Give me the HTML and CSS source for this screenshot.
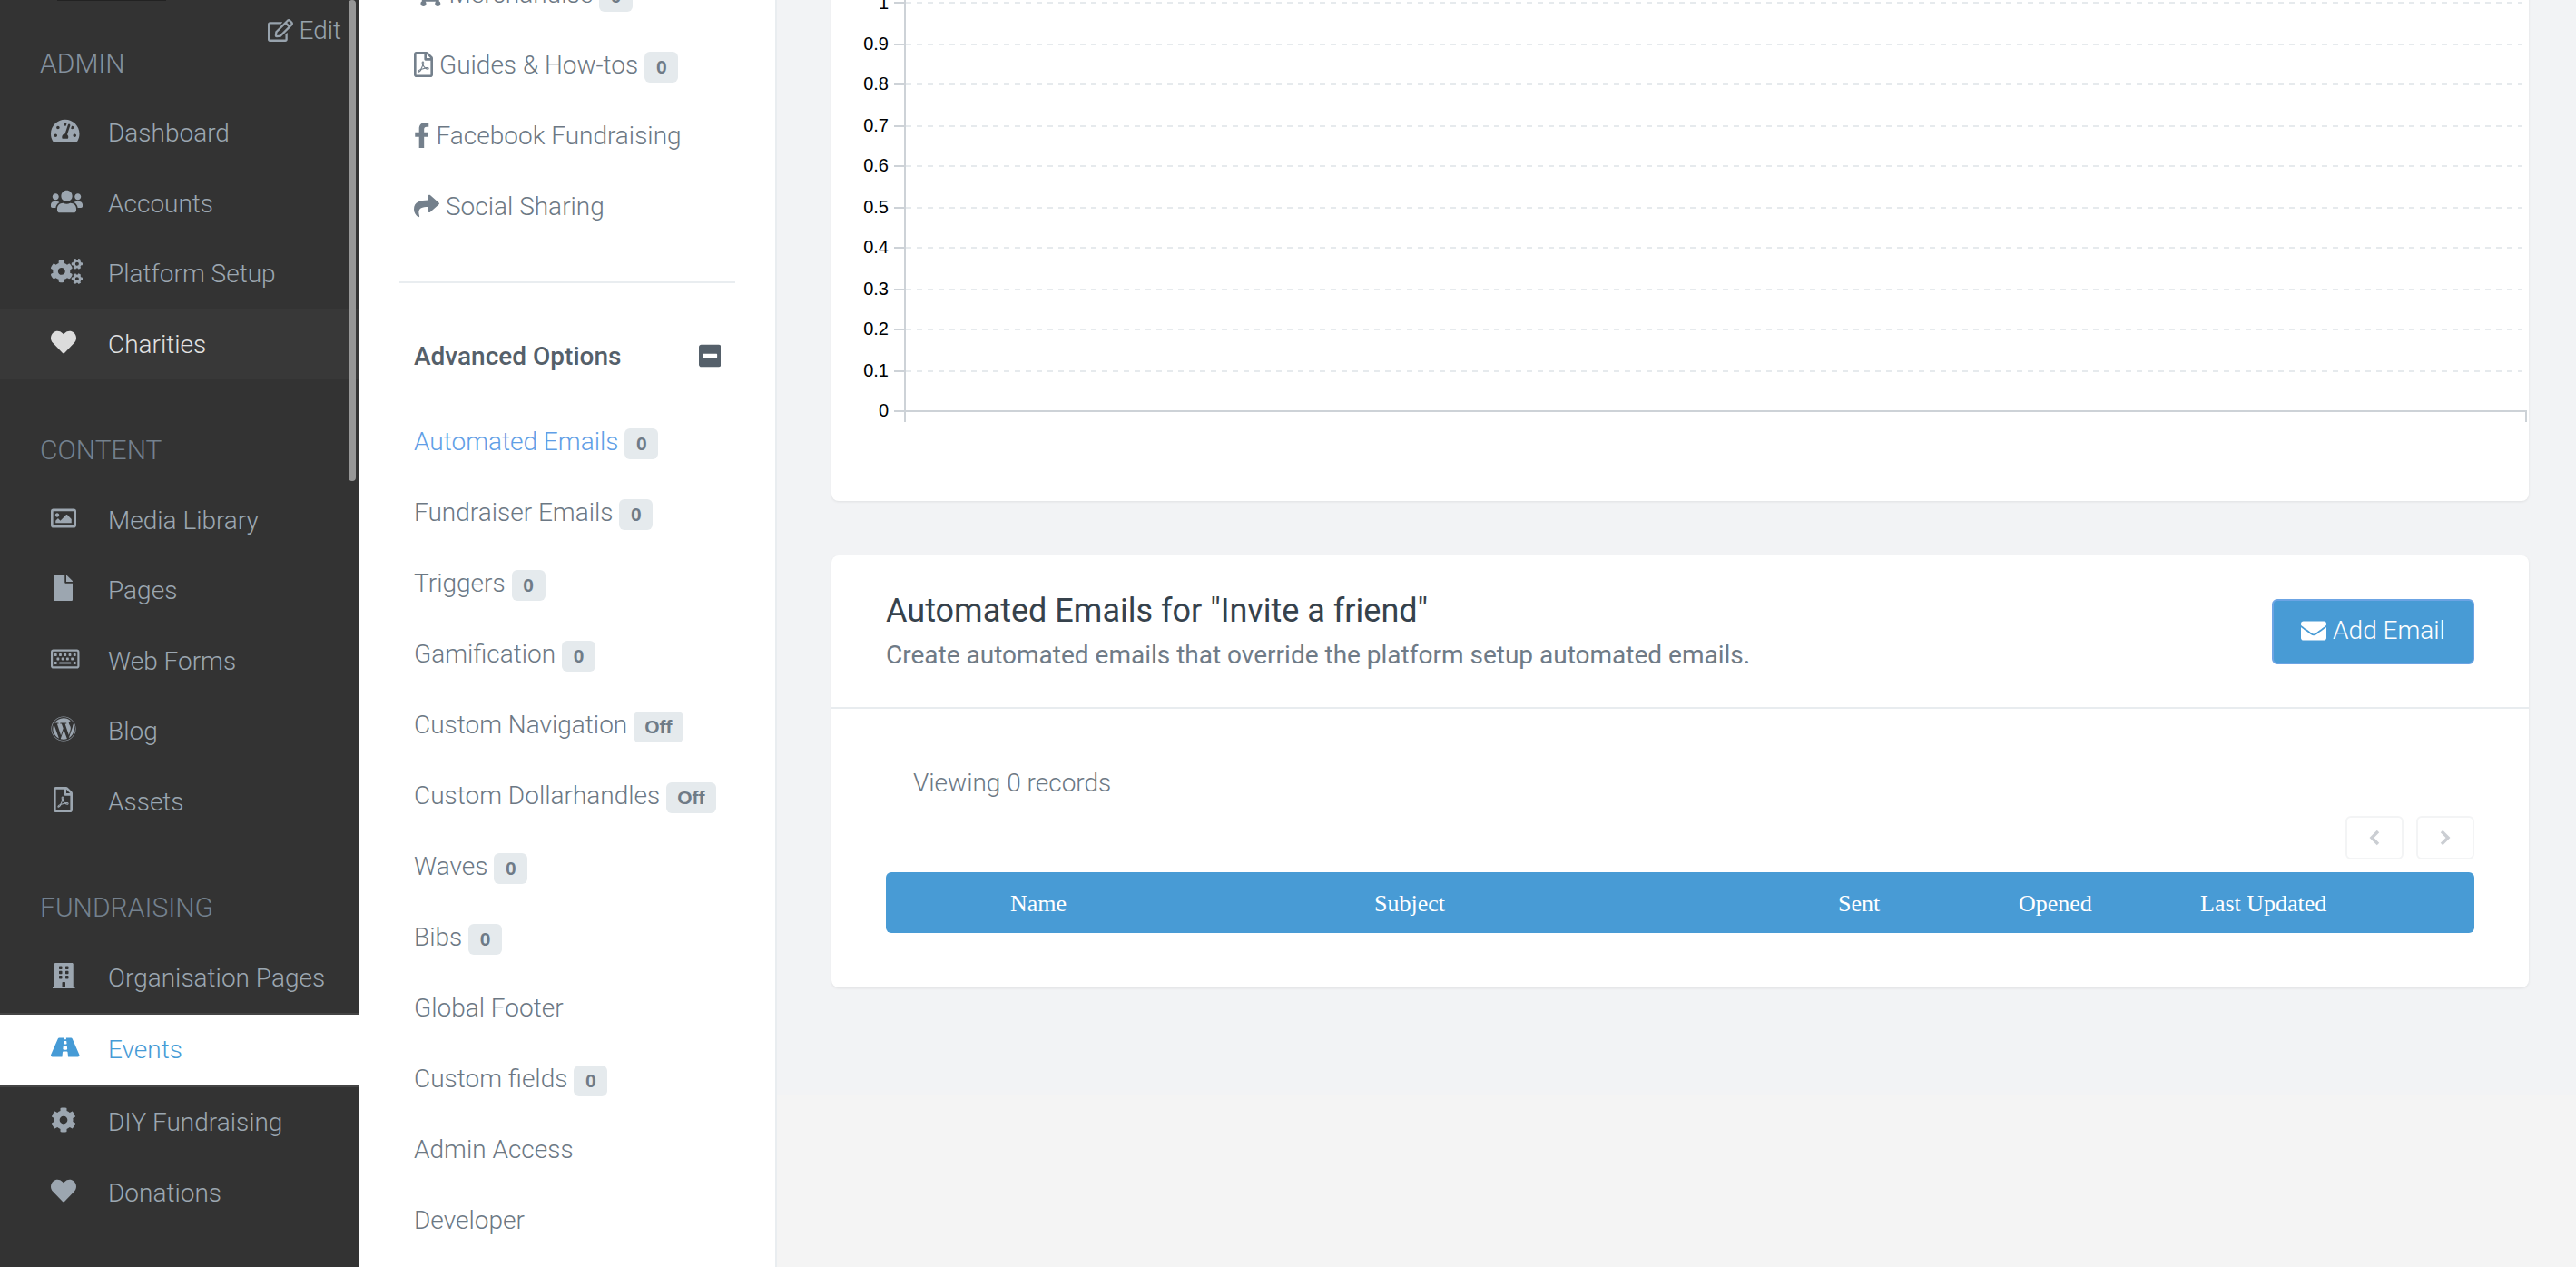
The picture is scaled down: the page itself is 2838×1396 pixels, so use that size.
FILE: index.html
```html
<!DOCTYPE html>
<html lang="en">
<head>
<meta charset="utf-8">
<title>Automated Emails</title>
<link rel="stylesheet" href="styles.css">
</head>
<body>
<div class="app">
  <aside class="sidebar">
    <div class="top-sliver"></div>
    <a class="edit"><svg class="edit-ico" viewBox="0 0 576 512"><path d="M402.3 344.9l32-32c5-5 13.7-1.5 13.7 5.7V464c0 26.5-21.5 48-48 48H48c-26.5 0-48-21.5-48-48V112c0-26.5 21.5-48 48-48h273.5c7.1 0 10.7 8.6 5.7 13.7l-32 32c-1.5 1.5-3.5 2.3-5.7 2.3H48v352h352V350.5c0-2.1.8-4.1 2.3-5.6zm156.6-201.8L296.3 405.7l-90.4 10c-26.2 2.9-48.5-19.2-45.6-45.6l10-90.4L432.9 17.1c22.9-22.9 59.9-22.9 82.7 0l43.2 43.2c22.9 22.9 22.9 60 .1 82.8zM460.1 174L402 115.9 216.2 301.8l-7.3 65.3 65.3-7.3L460.1 174zm64.8-79.7l-43.2-43.2c-4.1-4.1-10.8-4.1-14.8 0L436 82l58.1 58.1 30.9-30.9c4-4.2 4-10.8-.1-14.9z"/></svg>Edit</a>
    <div class="scroll-thumb"></div>

    <section class="group group-first">
      <h3 class="group-title group-title-admin">ADMIN</h3>
      <a class="item"><span class="ico"><svg class="i" width="31.5" height="28" viewBox="0 0 576 512"><path d="M288 32C128.94 32 0 160.94 0 320c0 52.8 14.25 102.26 39.06 144.8 5.61 9.62 16.3 15.2 27.44 15.2h443c11.14 0 21.83-5.58 27.44-15.2C561.75 422.26 576 372.8 576 320c0-159.06-128.94-288-288-288zm0 64c14.71 0 26.58 10.13 30.32 23.65-1.11 2.26-2.64 4.23-3.45 6.67l-9.22 27.67c-5.13 3.49-10.97 6.01-17.64 6.01-17.67 0-32-14.33-32-32S270.33 96 288 96zM96 384c-17.67 0-32-14.33-32-32s14.33-32 32-32 32 14.33 32 32-14.33 32-32 32zm48-160c-17.67 0-32-14.33-32-32s14.33-32 32-32 32 14.33 32 32-14.33 32-32 32zm246.77-72.41l-61.33 184C343.13 347.33 352 364.54 352 384c0 11.72-3.38 22.55-8.88 32H232.88c-5.5-9.45-8.88-20.28-8.88-32 0-33.94 26.5-61.43 59.9-63.59l61.34-184.01c4.17-12.56 17.73-19.45 30.36-15.17 12.57 4.19 19.35 17.79 15.17 30.36zm14.66 57.2l15.52-46.55c3.47-1.29 7.13-2.23 11.05-2.23 17.67 0 32 14.33 32 32s-14.33 32-32 32c-11.38-.01-20.89-6.28-26.57-15.22zM480 384c-17.67 0-32-14.33-32-32s14.33-32 32-32 32 14.33 32 32-14.33 32-32 32z"/></svg></span>Dashboard</a>
      <a class="item"><span class="ico"><svg class="i" width="35" height="28" viewBox="0 0 640 512"><path d="M96 224c35.3 0 64-28.7 64-64s-28.7-64-64-64-64 28.7-64 64 28.7 64 64 64zm448 0c35.3 0 64-28.7 64-64s-28.7-64-64-64-64 28.7-64 64 28.7 64 64 64zm32 32h-64c-17.6 0-33.5 7.1-45.1 18.6 40.3 22.1 68.9 62 75.1 109.4h66c17.7 0 32-14.3 32-32v-32c0-35.3-28.7-64-64-64zm-256 0c61.9 0 112-50.1 112-112S381.9 32 320 32 208 82.1 208 144s50.1 112 112 112zm76.8 32h-8.3c-20.8 10-43.9 16-68.5 16s-47.6-6-68.5-16h-8.3C179.6 288 128 339.6 128 403.2V432c0 26.5 21.5 48 48 48h288c26.5 0 48-21.5 48-48v-28.8c0-63.6-51.6-115.2-115.2-115.2zm-223.7-13.4C161.5 263.1 145.6 256 128 256H64c-35.3 0-64 28.7-64 64v32c0 17.7 14.3 32 32 32h65.9c6.3-47.4 34.9-87.3 75.2-109.4z"/></svg></span>Accounts</a>
      <a class="item"><span class="ico"><svg class="i" width="35" height="28" viewBox="0 0 640 512"><path d="M512.1 191l-8.2 14.3c-3 5.3-9.4 7.5-15.1 5.4-11.8-4.4-22.6-10.7-32.1-18.6-4.6-3.8-5.8-10.5-2.8-15.7l8.2-14.3c-6.9-8-12.3-17.3-15.9-27.4h-16.5c-6 0-11.2-4.3-12.2-10.3-2-12-2.1-24.6 0-37.1 1-6 6.2-10.4 12.2-10.4h16.5c3.6-10.1 9-19.4 15.9-27.4l-8.2-14.3c-3-5.2-1.9-11.9 2.8-15.7 9.5-7.9 20.4-14.2 32.1-18.6 5.7-2.1 12.1.1 15.1 5.4l8.2 14.3c10.5-1.9 21.2-1.9 31.7 0L552 6.3c3-5.3 9.4-7.5 15.1-5.4 11.8 4.4 22.6 10.7 32.1 18.6 4.6 3.8 5.8 10.5 2.8 15.7l-8.2 14.3c6.9 8 12.3 17.3 15.9 27.4h16.5c6 0 11.2 4.3 12.2 10.3 2 12 2.1 24.6 0 37.1-1 6-6.2 10.4-12.2 10.4h-16.5c-3.6 10.1-9 19.4-15.9 27.4l8.2 14.3c3 5.2 1.9 11.9-2.8 15.7-9.5 7.9-20.4 14.2-32.1 18.6-5.7 2.1-12.1-.1-15.1-5.4l-8.2-14.3c-10.4 1.9-21.2 1.9-31.7 0zm-10.5-58.8c38.5 29.6 82.4-14.3 52.8-52.8-38.5-29.7-82.4 14.3-52.8 52.8zM386.3 286.1l33.7 16.8c10.1 5.8 14.5 18.1 10.5 29.1-8.9 24.2-26.4 46.4-42.6 65.8-7.4 8.9-20.2 11.1-30.3 5.3l-29.1-16.8c-16 13.7-34.6 24.6-54.9 31.7v33.6c0 11.6-8.3 21.6-19.7 23.6-24.6 4.2-50.4 4.4-75.9 0-11.5-2-20-11.9-20-23.6V418c-20.3-7.2-38.9-18-54.9-31.7L74 403c-10 5.8-22.9 3.6-30.3-5.3-16.2-19.4-33.3-41.6-42.2-65.7-4-10.9.4-23.2 10.5-29.1l33.3-16.8c-3.9-20.9-3.9-42.4 0-63.4L12 205.8c-10.1-5.8-14.6-18.1-10.5-29 8.9-24.2 26-46.4 42.2-65.8 7.4-8.9 20.2-11.1 30.3-5.3l29.1 16.8c16-13.7 34.6-24.6 54.9-31.7V57.1c0-11.5 8.2-21.5 19.6-23.5 24.6-4.2 50.5-4.4 76-.1 11.5 2 20 11.9 20 23.6v33.6c20.3 7.2 38.9 18 54.9 31.7l29.1-16.8c10-5.8 22.9-3.6 30.3 5.3 16.2 19.4 33.2 41.6 42.1 65.8 4 10.9.1 23.2-10 29.1l-33.7 16.8c3.9 21 3.9 42.5 0 63.5zm-117.6 21.1c59.2-77-28.7-164.9-105.7-105.7-59.2 77 28.7 164.9 105.7 105.7zm243.4 182.7l-8.2 14.3c-3 5.3-9.4 7.5-15.1 5.4-11.8-4.4-22.6-10.7-32.1-18.6-4.6-3.8-5.8-10.5-2.8-15.7l8.2-14.3c-6.9-8-12.3-17.3-15.9-27.4h-16.5c-6 0-11.2-4.3-12.2-10.3-2-12-2.1-24.6 0-37.1 1-6 6.2-10.4 12.2-10.4h16.5c3.6-10.1 9-19.4 15.9-27.4l-8.2-14.3c-3-5.2-1.9-11.9 2.8-15.7 9.5-7.9 20.4-14.2 32.1-18.6 5.7-2.1 12.1.1 15.1 5.4l8.2 14.3c10.5-1.9 21.2-1.9 31.7 0l8.2-14.3c3-5.3 9.4-7.5 15.1-5.4 11.8 4.4 22.6 10.7 32.1 18.6 4.6 3.8 5.8 10.5 2.8 15.7l-8.2 14.3c6.9 8 12.3 17.3 15.9 27.4h16.5c6 0 11.2 4.3 12.2 10.3 2 12 2.1 24.6 0 37.1-1 6-6.2 10.4-12.2 10.4h-16.5c-3.6 10.1-9 19.4-15.9 27.4l8.2 14.3c3 5.2 1.9 11.9-2.8 15.7-9.5 7.9-20.4 14.2-32.1 18.6-5.7 2.1-12.1-.1-15.1-5.4l-8.2-14.3c-10.4 1.9-21.2 1.9-31.7 0zM501.6 431c38.5 29.6 82.4-14.3 52.8-52.8-38.5-29.6-82.4 14.3-52.8 52.8z"/></svg></span>Platform Setup</a>
      <a class="item item-hover"><span class="ico"><svg class="i" width="28" height="28" viewBox="0 0 512 512"><path d="M462.3 62.6C407.5 15.9 326 24.3 275.7 76.2L256 96.5l-19.7-20.3C186.1 24.3 104.5 15.9 49.7 62.6c-62.8 53.6-66.1 149.8-9.9 207.9l193.5 199.8c12.5 12.9 32.8 12.9 45.3 0l193.5-199.8c56.3-58.1 53-154.3-9.8-207.9z"/></svg></span>Charities</a>
    </section>

    <section class="group">
      <h3 class="group-title">CONTENT</h3>
      <a class="item"><span class="ico"><svg class="i" width="28" height="28" viewBox="0 0 512 512"><path d="M464 64H48C21.49 64 0 85.49 0 112v288c0 26.51 21.49 48 48 48h416c26.51 0 48-21.49 48-48V112c0-26.51-21.49-48-48-48zm-6 336H54a6 6 0 0 1-6-6V118a6 6 0 0 1 6-6h404a6 6 0 0 1 6 6v276a6 6 0 0 1-6 6zM128 152c-22.091 0-40 17.909-40 40s17.909 40 40 40 40-17.909 40-40-17.909-40-40-40zM96 352h320v-80l-87.515-87.515c-4.686-4.686-12.284-4.686-16.971 0L192 304l-39.515-39.515c-4.686-4.686-12.284-4.686-16.971 0L96 304v48z"/></svg></span>Media Library</a>
      <a class="item"><span class="ico"><svg class="i i-narrow" width="21" height="28" viewBox="0 0 384 512"><path d="M224 136V0H24C10.7 0 0 10.7 0 24v464c0 13.3 10.7 24 24 24h336c13.3 0 24-10.7 24-24V160H248c-13.2 0-24-10.8-24-24zm160-14.1v6.1H256V0h6.1c6.4 0 12.5 2.5 17 7l97.9 98c4.5 4.5 7 10.6 7 16.9z"/></svg></span>Pages</a>
      <a class="item"><span class="ico"><svg class="i" width="31.5" height="28" viewBox="0 0 576 512"><path d="M528 64H48C21.49 64 0 85.49 0 112v288c0 26.51 21.49 48 48 48h480c26.51 0 48-21.49 48-48V112c0-26.51-21.49-48-48-48zm8 336c0 4.411-3.589 8-8 8H48c-4.411 0-8-3.589-8-8V112c0-4.411 3.589-8 8-8h480c4.411 0 8 3.589 8 8v288zM170 270v-28c0-6.627-5.373-12-12-12h-28c-6.627 0-12 5.373-12 12v28c0 6.627 5.373 12 12 12h28c6.627 0 12-5.373 12-12zm96 0v-28c0-6.627-5.373-12-12-12h-28c-6.627 0-12 5.373-12 12v28c0 6.627 5.373 12 12 12h28c6.627 0 12-5.373 12-12zm96 0v-28c0-6.627-5.373-12-12-12h-28c-6.627 0-12 5.373-12 12v28c0 6.627 5.373 12 12 12h28c6.627 0 12-5.373 12-12zm96 0v-28c0-6.627-5.373-12-12-12h-28c-6.627 0-12 5.373-12 12v28c0 6.627 5.373 12 12 12h28c6.627 0 12-5.373 12-12zm-336 82v-28c0-6.627-5.373-12-12-12H82c-6.627 0-12 5.373-12 12v28c0 6.627 5.373 12 12 12h28c6.627 0 12-5.373 12-12zm384 0v-28c0-6.627-5.373-12-12-12h-28c-6.627 0-12 5.373-12 12v28c0 6.627 5.373 12 12 12h28c6.627 0 12-5.373 12-12zM122 188v-28c0-6.627-5.373-12-12-12H82c-6.627 0-12 5.373-12 12v28c0 6.627 5.373 12 12 12h28c6.627 0 12-5.373 12-12zm96 0v-28c0-6.627-5.373-12-12-12h-28c-6.627 0-12 5.373-12 12v28c0 6.627 5.373 12 12 12h28c6.627 0 12-5.373 12-12zm96 0v-28c0-6.627-5.373-12-12-12h-28c-6.627 0-12 5.373-12 12v28c0 6.627 5.373 12 12 12h28c6.627 0 12-5.373 12-12zm96 0v-28c0-6.627-5.373-12-12-12h-28c-6.627 0-12 5.373-12 12v28c0 6.627 5.373 12 12 12h28c6.627 0 12-5.373 12-12zm96 0v-28c0-6.627-5.373-12-12-12h-28c-6.627 0-12 5.373-12 12v28c0 6.627 5.373 12 12 12h28c6.627 0 12-5.373 12-12zm-98 158v-16c0-6.627-5.373-12-12-12H180c-6.627 0-12 5.373-12 12v16c0 6.627 5.373 12 12 12h216c6.627 0 12-5.373 12-12z"/></svg></span>Web Forms</a>
      <a class="item"><span class="ico"><svg class="i" width="28" height="28" viewBox="0 0 512 512"><path d="M61.7 169.4l101.5 278C92.2 413 43.3 340.2 43.3 256c0-30.9 6.6-60.1 18.4-86.6zm337.9 75.9c0-26.3-9.4-44.5-17.5-58.7-10.8-17.5-20.9-32.4-20.9-49.9 0-19.6 14.8-37.8 35.7-37.8.9 0 1.8.1 2.8.2-37.9-34.7-88.3-55.9-143.7-55.9-74.3 0-139.7 38.1-177.8 95.9 5 .2 9.7.3 13.7.3 22.2 0 56.7-2.7 56.7-2.7 11.5-.7 12.8 16.2 1.4 17.5 0 0-11.5 1.3-24.3 2l77.5 230.4L249.8 247l-33.1-90.8c-11.5-.7-22.3-2-22.3-2-11.5-.7-10.1-18.2 1.3-17.5 0 0 35.1 2.7 56 2.7 22.2 0 56.7-2.7 56.7-2.7 11.5-.7 12.8 16.2 1.4 17.5 0 0-11.5 1.3-24.3 2l76.9 228.7 21.2-70.9c9-29.4 16-50.5 16-68.7zm-139.9 29.4l-63.8 185.5c19.1 5.6 39.2 8.7 60.1 8.7 24.8 0 48.5-4.3 70.6-12.1-.6-.9-1.1-1.9-1.5-2.9l-65.4-179.2zm183-120.7c.9 6.8 1.4 14 1.4 21.9 0 21.6-4 45.8-16.2 76.2l-65 187.9C426.2 403 468.7 334.5 468.7 256c0-37-9.4-71.8-26-102.1zM504 256c0 136.8-111.3 248-248 248C119.2 504 8 392.7 8 256 8 119.2 119.2 8 256 8c136.7 0 248 111.2 248 248zm-11.4 0c0-130.5-106.2-236.6-236.6-236.6C125.5 19.4 19.4 125.5 19.4 256S125.6 492.6 256 492.6c130.5 0 236.6-106.1 236.6-236.6z"/></svg></span>Blog</a>
      <a class="item"><span class="ico"><svg class="i i-narrow" width="21" height="28" viewBox="0 0 384 512"><path d="M369.9 97.9L286 14C277 5 264.8-.1 252.1-.1H48C21.5 0 0 21.5 0 48v416c0 26.5 21.5 48 48 48h288c26.5 0 48-21.5 48-48V131.9c0-12.7-5.1-25-14.1-34zM332.1 128H256V51.9l76.1 76.1zM48 464V48h160v104c0 13.3 10.7 24 24 24h104v288H48zm250.2-143.7c-12.2-12-47-8.7-64.4-6.5-17.2-10.5-28.7-25-36.8-46.3 3.9-16.1 10.1-40.6 5.4-56-4.2-26.2-37.8-23.6-42.6-5.9-4.4 16.1-.4 38.5 7 67.1-10 23.9-24.9 56-35.4 74.4-20 10.3-47 26.2-51 46.2-3.3 15.8 26 55.2 76.1-31.2 22.4-7.4 46.8-16.5 68.4-20.1 18.9 10.2 41 17 55.8 17 25.5 0 28-28.2 17.5-38.7zm-198.1 77.8c5.1-13.7 24.5-29.5 30.4-35-19 30.3-30.4 35.7-30.4 35zm81.6-190.6c7.4 0 6.7 32.1 1.8 40.8-4.4-13.9-4.3-40.8-1.8-40.8zm-24.4 136.6c9.7-16.9 18-37 24.7-54.7 8.3 15.1 18.9 27.2 30.1 35.5-20.8 4.3-38.9 13.1-54.8 19.2zm131.6-5s-5 6-37.3-7.8c35.1-2.6 40.9 5.4 37.3 7.8z"/></svg></span>Assets</a>
    </section>

    <section class="group">
      <h3 class="group-title">FUNDRAISING</h3>
      <a class="item"><span class="ico"><svg class="i i-mid" width="24.5" height="28" viewBox="0 0 448 512"><path d="M436 480h-20V24c0-13.255-10.745-24-24-24H56C42.745 0 32 10.745 32 24v456H12c-6.627 0-12 5.373-12 12v20h448v-20c0-6.627-5.373-12-12-12zM128 76c0-6.627 5.373-12 12-12h40c6.627 0 12 5.373 12 12v40c0 6.627-5.373 12-12 12h-40c-6.627 0-12-5.373-12-12V76zm0 96c0-6.627 5.373-12 12-12h40c6.627 0 12 5.373 12 12v40c0 6.627-5.373 12-12 12h-40c-6.627 0-12-5.373-12-12v-40zm52 148h-40c-6.627 0-12-5.373-12-12v-40c0-6.627 5.373-12 12-12h40c6.627 0 12 5.373 12 12v40c0 6.627-5.373 12-12 12zm76 160h-64v-84c0-6.627 5.373-12 12-12h40c6.627 0 12 5.373 12 12v84zm64-172c0 6.627-5.373 12-12 12h-40c-6.627 0-12-5.373-12-12v-40c0-6.627 5.373-12 12-12h40c6.627 0 12 5.373 12 12v40zm0-96c0 6.627-5.373 12-12 12h-40c-6.627 0-12-5.373-12-12v-40c0-6.627 5.373-12 12-12h40c6.627 0 12 5.373 12 12v40zm0-96c0 6.627-5.373 12-12 12h-40c-6.627 0-12-5.373-12-12V76c0-6.627 5.373-12 12-12h40c6.627 0 12 5.373 12 12v40z"/></svg></span>Organisation Pages</a>
      <a class="item item-active"><span class="ico"><svg class="i" width="31.5" height="28" viewBox="0 0 576 512"><path d="M573.19 402.67l-139.79-320C428.43 71.29 417.6 64 405.68 64h-97.59l2.45 23.16c.5 4.72-3.21 8.84-7.96 8.84h-29.16c-4.75 0-8.46-4.12-7.96-8.84L267.91 64h-97.59c-11.93 0-22.76 7.29-27.73 18.67L2.8 402.67C-6.45 423.86 8.31 448 30.54 448h196.84l10.31-97.68c.86-8.14 7.72-14.32 15.91-14.32h68.8c8.19 0 15.05 6.18 15.91 14.32L348.62 448h196.84c22.23 0 36.99-24.14 27.73-45.33zM260.4 135.16a8 8 0 0 1 7.96-7.16h39.29c4.09 0 7.53 3.09 7.96 7.16l4.6 43.58c.75 7.09-4.81 13.26-11.93 13.26h-40.54c-7.13 0-12.68-6.17-11.93-13.26l4.6-43.58zM315.64 304h-55.29c-9.5 0-16.91-8.23-15.91-17.68l5.07-48c.86-8.14 7.72-14.32 15.91-14.32h45.15c8.19 0 15.05 6.18 15.91 14.32l5.07 48c1 9.45-6.41 17.68-15.91 17.68z"/></svg></span>Events</a>
      <a class="item"><span class="ico"><svg class="i" width="28" height="28" viewBox="0 0 512 512"><path d="M487.4 315.7l-42.6-24.6c4.3-23.2 4.3-47 0-70.2l42.6-24.6c4.9-2.8 7.1-8.6 5.5-14-11.1-35.6-30-67.8-54.7-94.6-3.8-4.1-10-5.1-14.8-2.3L380.8 110c-17.9-15.4-38.5-27.3-60.8-35.1V25.8c0-5.6-3.9-10.5-9.4-11.7-36.7-8.2-74.3-7.8-109.2 0-5.5 1.2-9.4 6.1-9.4 11.7V75c-22.2 7.9-42.8 19.8-60.8 35.1L88.7 85.5c-4.9-2.8-11-1.9-14.8 2.3-24.7 26.7-43.6 58.9-54.7 94.6-1.7 5.4.6 11.2 5.5 14L67.3 221c-4.3 23.2-4.3 47 0 70.2l-42.6 24.6c-4.9 2.8-7.1 8.6-5.5 14 11.1 35.6 30 67.8 54.7 94.6 3.8 4.1 10 5.1 14.8 2.3l42.6-24.6c17.9 15.4 38.5 27.3 60.8 35.1v49.2c0 5.6 3.9 10.5 9.4 11.7 36.7 8.2 74.3 7.8 109.2 0 5.5-1.2 9.4-6.1 9.4-11.7v-49.2c22.2-7.9 42.8-19.8 60.8-35.1l42.6 24.6c4.9 2.8 11 1.9 14.8-2.3 24.7-26.7 43.6-58.9 54.7-94.6 1.5-5.5-.7-11.3-5.6-14.1zM256 336c-44.1 0-80-35.9-80-80s35.9-80 80-80 80 35.9 80 80-35.9 80-80 80z"/></svg></span>DIY Fundraising</a>
      <a class="item"><span class="ico"><svg class="i" width="28" height="28" viewBox="0 0 512 512"><path d="M462.3 62.6C407.5 15.9 326 24.3 275.7 76.2L256 96.5l-19.7-20.3C186.1 24.3 104.5 15.9 49.7 62.6c-62.8 53.6-66.1 149.8-9.9 207.9l193.5 199.8c12.5 12.9 32.8 12.9 45.3 0l193.5-199.8c56.3-58.1 53-154.3-9.8-207.9z"/></svg></span>Donations</a>
    </section>
  </aside>

  <nav class="subnav">
    <ul class="sub-list sub-list-first">
      <li class="sub-item"><svg class="s-ico" width="31.5" height="28" viewBox="0 0 576 512"><path d="M528.12 301.319l47.273-208C578.806 78.301 567.391 64 551.99 64H159.208l-9.166-44.81C147.758 8.021 137.93 0 126.529 0H24C10.745 0 0 10.745 0 24v16c0 13.255 10.745 24 24 24h69.883l70.248 343.435C147.325 417.1 136 435.222 136 456c0 30.928 25.072 56 56 56s56-25.072 56-56c0-15.674-6.447-29.835-16.824-40h209.647C430.447 426.165 424 440.326 424 456c0 30.928 25.072 56 56 56s56-25.072 56-56c0-22.172-12.888-41.332-31.579-50.405l5.517-24.276c3.413-15.018-8.002-29.319-23.403-29.319H218.117l-6.545-32h293.145c11.206 0 20.92-7.754 23.403-18.681z"/></svg>Merchandise<span class="badge">0</span></li>
      <li class="sub-item"><svg class="s-ico" width="21" height="28" viewBox="0 0 384 512"><path d="M369.9 97.9L286 14C277 5 264.8-.1 252.1-.1H48C21.5 0 0 21.5 0 48v416c0 26.5 21.5 48 48 48h288c26.5 0 48-21.5 48-48V131.9c0-12.7-5.1-25-14.1-34zM332.1 128H256V51.9l76.1 76.1zM48 464V48h160v104c0 13.3 10.7 24 24 24h104v288H48zm250.2-143.7c-12.2-12-47-8.7-64.4-6.5-17.2-10.5-28.7-25-36.8-46.3 3.9-16.1 10.1-40.6 5.4-56-4.2-26.2-37.8-23.6-42.6-5.9-4.4 16.1-.4 38.5 7 67.1-10 23.9-24.9 56-35.4 74.4-20 10.3-47 26.2-51 46.2-3.3 15.8 26 55.2 76.1-31.2 22.4-7.4 46.8-16.5 68.4-20.1 18.9 10.2 41 17 55.8 17 25.5 0 28-28.2 17.5-38.7zm-198.1 77.8c5.1-13.7 24.5-29.5 30.4-35-19 30.3-30.4 35.7-30.4 35zm81.6-190.6c7.4 0 6.7 32.1 1.8 40.8-4.4-13.9-4.3-40.8-1.8-40.8zm-24.4 136.6c9.7-16.9 18-37 24.7-54.7 8.3 15.1 18.9 27.2 30.1 35.5-20.8 4.3-38.9 13.1-54.8 19.2zm131.6-5s-5 6-37.3-7.8c35.1-2.6 40.9 5.4 37.3 7.8z"/></svg>Guides &amp; How-tos<span class="badge">0</span></li>
      <li class="sub-item"><svg class="s-ico" width="17.5" height="28" viewBox="0 0 320 512"><path d="M279.14 288l14.22-92.66h-88.91v-60.13c0-25.35 12.42-50.06 52.24-50.06h40.42V6.26S260.43 0 225.36 0c-73.22 0-121.08 44.38-121.08 124.72v70.62H22.89V288h81.39v224h100.17V288z"/></svg>Facebook Fundraising</li>
      <li class="sub-item"><svg class="s-ico" width="28" height="28" viewBox="0 0 512 512"><path d="M503.691 189.836L327.687 37.851C312.281 24.546 288 35.347 288 56.015v80.053C127.371 137.907 0 170.1 0 322.326c0 61.441 39.581 122.309 83.333 154.132 13.653 9.931 33.111-2.533 28.077-18.631C66.066 312.814 132.917 274.316 288 272.085V360c0 20.7 24.3 31.453 39.687 18.164l176.004-152c11.071-9.562 11.086-26.753 0-36.328z"/></svg>Social Sharing</li>
    </ul>
    <hr class="sub-rule">
    <div class="sub-head">
      <span>Advanced Options</span>
      <svg class="sub-toggle" width="24.5" height="28" viewBox="0 0 448 512"><path d="M400 32H48C21.5 32 0 53.5 0 80v352c0 26.5 21.5 48 48 48h352c26.5 0 48-21.5 48-48V80c0-26.5-21.5-48-48-48zM92 296c-6.6 0-12-5.4-12-12v-56c0-6.6 5.4-12 12-12h264c6.6 0 12 5.4 12 12v56c0 6.6-5.4 12-12 12H92z"/></svg>
    </div>
    <ul class="sub-list">
      <li class="sub-item sub-item-current">Automated Emails<span class="badge">0</span></li>
      <li class="sub-item">Fundraiser Emails<span class="badge">0</span></li>
      <li class="sub-item">Triggers<span class="badge">0</span></li>
      <li class="sub-item">Gamification<span class="badge">0</span></li>
      <li class="sub-item">Custom Navigation<span class="badge">Off</span></li>
      <li class="sub-item">Custom Dollarhandles<span class="badge">Off</span></li>
      <li class="sub-item">Waves<span class="badge">0</span></li>
      <li class="sub-item">Bibs<span class="badge">0</span></li>
      <li class="sub-item">Global Footer</li>
      <li class="sub-item">Custom fields<span class="badge">0</span></li>
      <li class="sub-item">Admin Access</li>
      <li class="sub-item">Developer</li>
    </ul>
  </nav>

  <main class="main">
    <section class="card card-chart">
      <svg class="chart" width="1870" height="542" viewBox="0 0 1870 542">
        <g class="grid">
          <line x1="82" x2="1863" y1="3" y2="3"/><line x1="82" x2="1863" y1="49" y2="49"/><line x1="82" x2="1863" y1="93" y2="93"/><line x1="82" x2="1863" y1="139" y2="139"/><line x1="82" x2="1863" y1="183" y2="183"/><line x1="82" x2="1863" y1="229" y2="229"/><line x1="82" x2="1863" y1="273" y2="273"/><line x1="82" x2="1863" y1="319" y2="319"/><line x1="82" x2="1863" y1="363" y2="363"/><line x1="82" x2="1863" y1="409" y2="409"/>
        </g>
        <g class="axis">
          <line x1="81" x2="81" y1="0" y2="465"/>
          <line x1="69" x2="1868" y1="453" y2="453"/>
          <line x1="1867" x2="1867" y1="453" y2="465"/>
          <line x1="69" x2="81" y1="3" y2="3"/><line x1="69" x2="81" y1="49" y2="49"/><line x1="69" x2="81" y1="93" y2="93"/><line x1="69" x2="81" y1="139" y2="139"/><line x1="69" x2="81" y1="183" y2="183"/><line x1="69" x2="81" y1="229" y2="229"/><line x1="69" x2="81" y1="273" y2="273"/><line x1="69" x2="81" y1="319" y2="319"/><line x1="69" x2="81" y1="363" y2="363"/><line x1="69" x2="81" y1="409" y2="409"/>
        </g>
        <g class="labels">
          <text x="63" y="10">1</text><text x="63" y="55">0.9</text><text x="63" y="99">0.8</text><text x="63" y="145">0.7</text><text x="63" y="189">0.6</text><text x="63" y="235">0.5</text><text x="63" y="279">0.4</text><text x="63" y="325">0.3</text><text x="63" y="369">0.2</text><text x="63" y="415">0.1</text><text x="63" y="459">0</text>
        </g>
      </svg>
    </section>

    <section class="card card-emails">
      <header class="card-head">
        <div class="card-head-text">
          <h2 class="card-title">Automated Emails for "Invite a friend"</h2>
          <p class="card-sub">Create automated emails that override the platform setup automated emails.</p>
        </div>
        <button class="btn-primary"><svg class="btn-ico" width="28" height="28" viewBox="0 0 512 512"><path d="M502.3 190.8c3.9-3.1 9.7-.2 9.7 4.7V400c0 26.5-21.5 48-48 48H48c-26.5 0-48-21.5-48-48V195.6c0-5 5.7-7.8 9.7-4.7 22.4 17.4 52.1 39.5 154.1 113.6 21.1 15.4 56.7 47.8 92.2 47.6 35.7.3 72-32.8 92.3-47.6 102-74.1 131.6-96.3 154-113.7zM256 320c23.2.4 56.6-29.2 73.4-41.4 132.7-96.3 142.8-104.7 173.4-128.7 5.8-4.5 9.2-11.5 9.2-18.9v-19c0-26.5-21.5-48-48-48H48C21.5 64 0 85.5 0 112v19c0 7.4 3.4 14.3 9.2 18.9 30.6 23.9 40.7 32.4 173.4 128.7 16.8 12.2 50.2 41.8 73.4 41.4z"/></svg>Add Email</button>
      </header>
      <div class="card-body">
        <div class="viewing">Viewing 0 records</div>
        <div class="pager">
          <button class="pager-btn"><svg width="12" height="18" viewBox="0 0 12 18"><path d="M10 2 3 9l7 7"/></svg></button>
          <button class="pager-btn"><svg width="12" height="18" viewBox="0 0 12 18"><path d="M2 2l7 7-7 7"/></svg></button>
        </div>
        <div class="thead">
          <span>Name</span><span>Subject</span><span>Sent</span><span>Opened</span><span>Last Updated</span>
        </div>
      </div>
    </section>
  </main>
</div>
</body>
</html>
```
FILE: styles.css
```css
* { box-sizing: border-box; }
html, body { margin: 0; height: 100%; background: #f4f4f4; overflow: hidden; }
body { font-family: Roboto, "Liberation Sans", sans-serif; font-weight: 300; font-size: 28px; }
ul { list-style: none; margin: 0; padding: 0; }
h2, h3, p { margin: 0; font-weight: inherit; font-size: inherit; }

.app { display: flex; height: 1396px; overflow: hidden; }

/* left sidebar */
.sidebar { position: relative; flex: 0 0 396px; background: #333; color: #9ca7b1; }
.top-sliver { position: absolute; top: 0; left: 63px; width: 120px; height: 1px; background: #222; }
.edit { position: absolute; top: 14px; right: 20px; display: flex; align-items: center; height: 38px; color: #98a3ad; }
.edit-ico { width: 28px; height: 25px; margin-right: 6px; fill: #98a3ad; }
.scroll-thumb { position: absolute; top: 0; left: 384px; width: 8px; height: 530px; border-radius: 4px; background: #979797; z-index: 2; }
.group { margin-top: 38px; }
.group-first { margin-top: 0; padding-top: 30px; }
.group-title { display: flex; align-items: center; height: 78px; padding-left: 44px; font-size: 30px; color: #74818e; }
.group-title-admin { color: #84919e; }
.item { display: flex; align-items: center; height: 77.6px; padding-left: 56px; }
.ico { flex: 0 0 63px; display: flex; align-items: center; }
.i { fill: #9ca6b0; margin-top: -5px; }
.i-narrow { margin-left: 3px; }
.i-mid { margin-left: 2px; }
.item-hover { background: #383838; color: #e2e2e2; }
.item-hover .i { fill: #dcdcdc; }
.item-active { height: 82px; background: #fff; color: #469bd6; border-top: 2px solid #444; border-bottom: 2px solid #444; background-clip: padding-box; }
.item-active .i { fill: #469bd6; }

/* secondary nav */
.subnav { flex: 0 0 460px; background: #fff; border-right: 2px solid #e9edf0; padding: 0 44px 0 44px; color: #6c7884; }
.sub-list-first { margin-top: -46px; }
.sub-item { display: flex; align-items: center; height: 78px; padding-left: 16px; }
.sub-item-current { color: #609ee6; }
.s-ico { fill: #74808c; margin-right: 7px; margin-top: -1px; }
.badge { display: inline-flex; align-items: center; justify-content: center; min-width: 37px; height: 34px; padding: 0 12px; margin-left: 7px; margin-top: 5px; border-radius: 6px; background: #e5eaed; color: #6f7b87; font-family: "Liberation Sans", sans-serif; font-weight: 700; font-size: 21px; }
.sub-rule { height: 2px; margin: 44px 0 0; border: 0; background: #e9edf0; }
.sub-head { display: flex; align-items: center; justify-content: space-between; height: 78px; margin: 41px 0 16px; padding: 0 16px; font-weight: 500; color: #55606a; }
.sub-toggle { fill: #55606a; margin-top: -1px; }

/* main */
.main { flex: 1; height: 1207px; background: #f2f3f5; padding: 0 52px 0 60px; }
.card { background: #fff; border-radius: 8px; box-shadow: 0 1px 3px rgba(0, 0, 0, .08); }
.card-chart { height: 562px; margin-top: -10px; padding-top: 10px; }
.chart { display: block; }
.grid line { stroke: #e6eaed; stroke-width: 2; stroke-dasharray: 6 6; }
.axis line { stroke: #cdd2d7; stroke-width: 2; }
.labels text { font-family: "Liberation Sans", sans-serif; font-weight: 400; font-size: 20px; fill: #000; text-anchor: end; }

.card-emails { height: 476px; margin-top: 60px; }
.card-head { display: flex; align-items: center; justify-content: space-between; height: 169px; padding: 0 60px; border-bottom: 2px solid #e8ecef; }
.card-title { font-size: 36px; font-weight: 400; color: #36424c; line-height: 44px; padding-top: 1px; }
.card-sub { font-size: 28px; font-weight: 400; color: #6f7b87; line-height: 40px; margin-top: 7px; }
.btn-primary { display: flex; align-items: center; justify-content: center; width: 223px; height: 72px; border: 2px solid #6ca4e4; border-radius: 6px; background: #489bd5; color: #fff; font: 300 28px Roboto, sans-serif; padding: 0 0 2px; }
.btn-ico { fill: #fff; margin-right: 7px; }
.card-body { padding: 54px 60px 0; }
.viewing { height: 56px; line-height: 56px; padding-left: 30px; color: #6c7884; }
.pager { display: flex; justify-content: flex-end; gap: 14px; margin-top: 8px; }
.pager-btn { display: flex; align-items: center; justify-content: center; width: 64px; height: 48px; padding: 0; border: 2px solid #f3f4f5; border-radius: 6px; background: #fff; }
.pager-btn path { fill: none; stroke: #cbced3; stroke-width: 3.5; }
.thead { display: grid; grid-template-columns: 401px 511px 199px 200px 1fr; align-items: center; height: 67px; margin-top: 14px; padding: 2px 0 0 137px; border-radius: 6px; background: #489bd5; color: #fff; font-family: "Liberation Serif", serif; font-weight: 400; font-size: 26px; }
```
